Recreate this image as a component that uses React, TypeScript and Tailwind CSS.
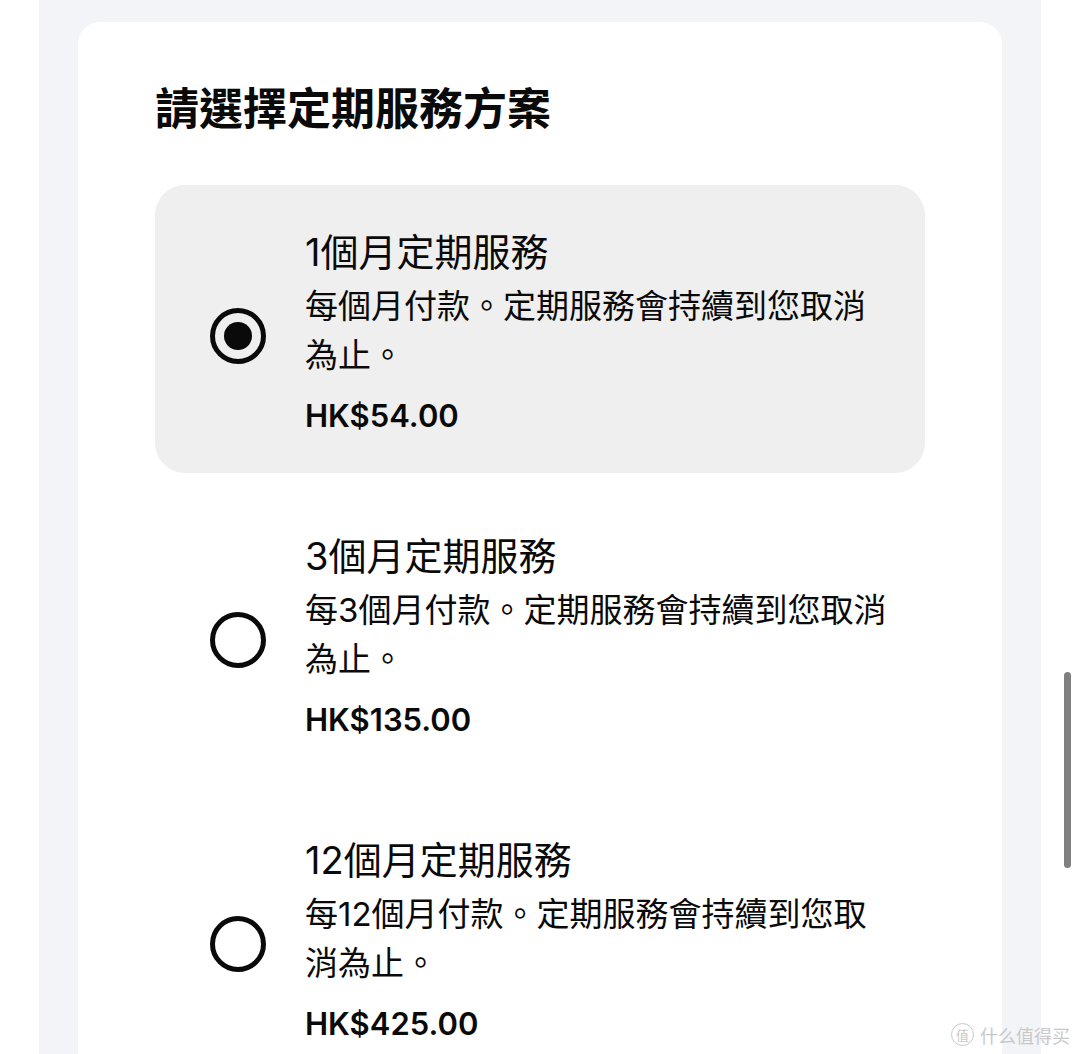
import React from 'react';

const plans = [
  { id: 1, title: '1個月定期服務', desc: '每個月付款。定期服務會持續到您取消為止。', price: 'HK$54.00' },
  { id: 3, title: '3個月定期服務', desc: '每3個月付款。定期服務會持續到您取消為止。', price: 'HK$135.00' },
  { id: 12, title: '12個月定期服務', desc: '每12個月付款。定期服務會持續到您取消為止。', price: 'HK$425.00' },
];

const font = { fontFamily: 'Inter, "Noto Sans CJK TC", sans-serif' };

function Radio({ checked }: { checked: boolean }) {
  return (
    <div className="mt-[7px] w-[56px] h-[56px] shrink-0 rounded-full border-[5px] border-[#0a0a0a] flex items-center justify-center">
      {checked && <div className="w-[28px] h-[28px] rounded-full bg-[#0a0a0a]" />}
    </div>
  );
}

function PlanOption({ plan, selected }: { plan: (typeof plans)[number]; selected: boolean }) {
  return (
    <div
      className={`flex items-center gap-[39px] rounded-[30px] pl-[55px] pr-[20px] pt-[43px] pb-[37px] ${
        selected ? 'bg-[#efefef]' : ''
      }`}
    >
      <Radio checked={selected} />
      <div className="w-[590px] text-[#0a0a0a]">
        <div className="text-[38px] leading-[48px]">{plan.title}</div>
        <p className="mt-[6px] text-[33px] leading-[49px]">{plan.desc}</p>
        <div className="mt-[16px] text-[31px] leading-[40px] font-semibold">{plan.price}</div>
      </div>
    </div>
  );
}

export default function App() {
  return (
    <div className="relative h-[1054px] w-[1080px] overflow-hidden bg-white" style={font}>
      <div className="ml-[39px] w-[1002px] h-full bg-[#f3f4f8] px-[39px] pt-[22px]">
        <div className="h-full bg-white rounded-t-[22px] px-[77px] pt-[61px]">
          <h1 className="text-[44px] leading-[53px] font-bold text-[#0a0a0a]">請選擇定期服務方案</h1>
          <div className="mt-[49px] flex flex-col gap-[16px]">
            {plans.map((p) => (
              <PlanOption key={p.id} plan={p} selected={p.id === 1} />
            ))}
          </div>
        </div>
      </div>

      {/* scrollbar */}
      <div className="absolute right-[9px] top-[672px] w-[7px] h-[196px] rounded-full bg-[#808080]" />

      {/* watermark */}
      <div
        className="absolute right-[10px] bottom-[8px] flex items-center gap-[6px] text-[#c8c8c8]"
        style={{ fontFamily: '"Noto Sans CJK SC", sans-serif' }}
      >
        <div className="w-[23px] h-[23px] rounded-full border border-[#c8c8c8] flex items-center justify-center text-[13px] leading-none">
          值
        </div>
        <span className="text-[18px] leading-none">什么值得买</span>
      </div>
    </div>
  );
}
